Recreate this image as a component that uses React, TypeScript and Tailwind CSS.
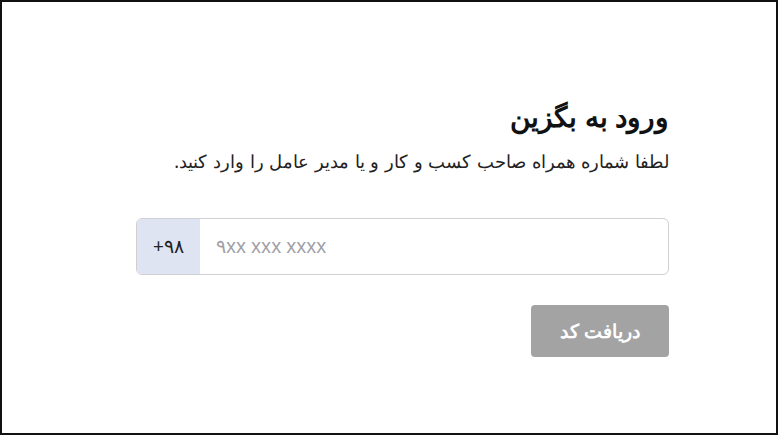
import React from "react";

export default function App() {
  return (
    <div className="w-[778px] h-[435px] border-2 border-[#111] bg-white box-border font-['Noto_Sans',sans-serif]">
      <div className="pl-[134px] pt-[94px]">
        <div className="w-[533px] flex flex-col" dir="rtl">
          <h1 className="text-[28px] font-bold text-[#111] leading-[40px]">ورود به بگزین</h1>
          <p className="mt-[11px] text-[18px] text-[#222] leading-[28px] [word-spacing:1px]">لطفا شماره همراه صاحب کسب و کار و یا مدیر عامل را وارد کنید.</p>
          <div dir="ltr" className="mt-[43px] h-[57px] flex rounded-[6px] border border-[#cfcfd4] overflow-hidden">
            <div className="w-[63px] bg-[#dfe4f3] flex items-center justify-center text-[19px] text-[#222]">+۹۸</div>
            <div className="flex-1 flex items-center pl-[16px] text-[19px] text-[#a0a0a8]">۹xx xxx xxxx</div>
          </div>
          <div className="mt-[30px] flex">
            <button className="w-[138px] h-[52px] rounded-[4px] bg-[#a3a3a3] text-white text-[19px] font-bold">دریافت کد</button>
          </div>
        </div>
      </div>
    </div>
  );
}
